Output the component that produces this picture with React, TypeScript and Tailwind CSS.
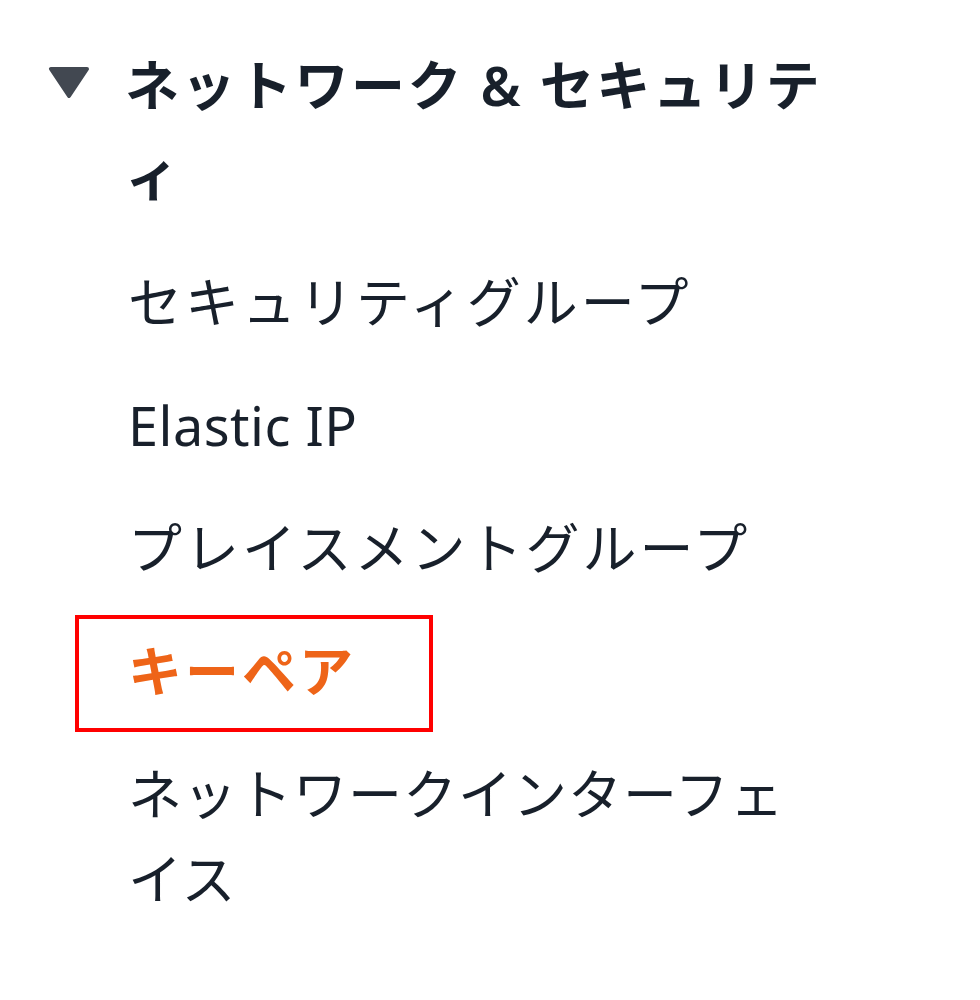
const items = [
  { label: 'セキュリティグループ', track: 'tracking-[3px]' },
  { label: 'Elastic IP', track: 'tracking-[0.5px]' },
  { label: 'プレイスメントグループ', track: 'tracking-[3px]' },
  { label: 'キーペア', track: 'tracking-[3px]', active: true },
  { label: 'ネットワークインターフェイス', track: 'tracking-[1px]' },
];

function Caret() {
  return (
    <svg width="42" height="32" viewBox="0 0 42 32" className="shrink-0 mt-[26px]">
      <path d="M3 3 L39 3 L21 30 Z" fill="#424851" stroke="#424851" strokeWidth="4" strokeLinejoin="round" />
    </svg>
  );
}

export default function App() {
  return (
    <div
      className="min-h-[1000px] w-[980px] bg-white text-[#18202b] pt-[40px] pl-[48px]"
      style={{ fontFamily: '"Noto Sans", "Noto Sans CJK JP", sans-serif' }}
    >
      <nav className="w-[780px]">
        {/* Section header */}
        <div className="flex items-start gap-[35px]">
          <Caret />
          <h2 className="text-[54px] leading-[90px] font-semibold tracking-[2.5px] w-[705px]">
            ネットワーク &amp; セキュリティ
          </h2>
        </div>

        {/* Links */}
        <ul className="mt-[40px] flex flex-col gap-[38px]">
          {items.map((item) => (
            <li key={item.label} className="relative pl-[80px]">
              {item.active && (
                <div className="absolute left-[27px] -top-[14px] w-[358px] h-[117px] border-[4px] border-[#ff0000]" />
              )}
              <a
                className={
                  item.active
                    ? `block text-[54px] leading-[85px] font-semibold text-[#ee6418] w-[700px] ${item.track}`
                    : `block text-[54px] leading-[85px] w-[700px] ${item.track}`
                }
              >
                {item.label}
              </a>
            </li>
          ))}
        </ul>
      </nav>
    </div>
  );
}
